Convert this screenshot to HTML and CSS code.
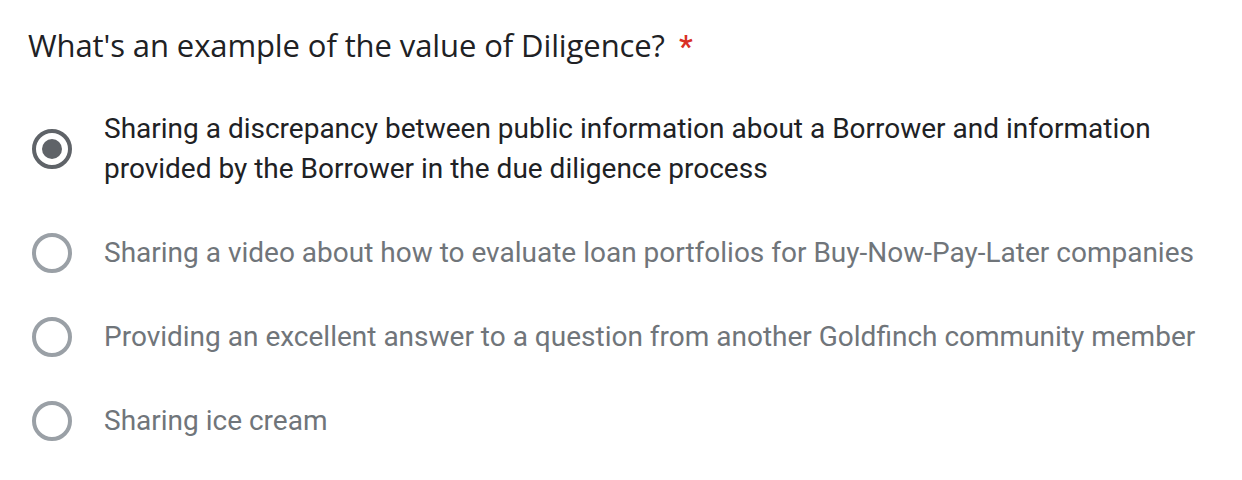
FILE: index.html
```html
<!DOCTYPE html>
<html>
<head>
<meta charset="utf-8">
<link rel="stylesheet" href="styles.css">
</head>
<body>
<div class="question">
  <div class="title">What's an example of the value of Diligence?<span class="req">*</span></div>
  <div class="options">
    <div class="option selected">
      <span class="radio"><span class="dot"></span></span>
      <span class="label">Sharing a discrepancy between public information about a Borrower and information provided by the Borrower in the due diligence process</span>
    </div>
    <div class="option">
      <span class="radio"></span>
      <span class="label">Sharing a video about how to evaluate loan portfolios for Buy-Now-Pay-Later companies</span>
    </div>
    <div class="option">
      <span class="radio"></span>
      <span class="label">Providing an excellent answer to a question from another Goldfinch community member</span>
    </div>
    <div class="option">
      <span class="radio"></span>
      <span class="label">Sharing ice cream</span>
    </div>
  </div>
</div>
</body>
</html>
```
FILE: styles.css
```css
html, body {
  margin: 0;
  padding: 0;
  background: #ffffff;
}
.question {
  padding: 23px 0 0 28px;
  width: 1190px;
}
.title {
  font-family: "Open Sans", Roboto, sans-serif;
  font-size: 31px;
  line-height: 44px;
  color: #202124;
  letter-spacing: -0.1px;
}
.req {
  color: #d93025;
  font-family: Roboto, sans-serif;
  font-weight: 500;
  margin-left: 14px;
}
.options {
  display: flex;
  flex-direction: column;
  gap: 44px;
  margin-top: 40px;
}
.option {
  display: flex;
  align-items: center;
}
.radio {
  box-sizing: border-box;
  width: 40px;
  height: 40px;
  border: 4px solid #9aa0a6;
  border-radius: 50%;
  margin-left: 4px;
  flex: none;
  display: flex;
  align-items: center;
  justify-content: center;
}
.selected .radio {
  border-color: #5f6368;
}
.dot {
  width: 20px;
  height: 20px;
  border-radius: 50%;
  background: #5f6368;
}
.label {
  margin-left: 32px;
  font-family: Roboto, "Liberation Sans", sans-serif;
  font-size: 28px;
  line-height: 40px;
  color: #70757a;
  flex: 1;
}
.selected .label {
  color: #202124;
}
```
